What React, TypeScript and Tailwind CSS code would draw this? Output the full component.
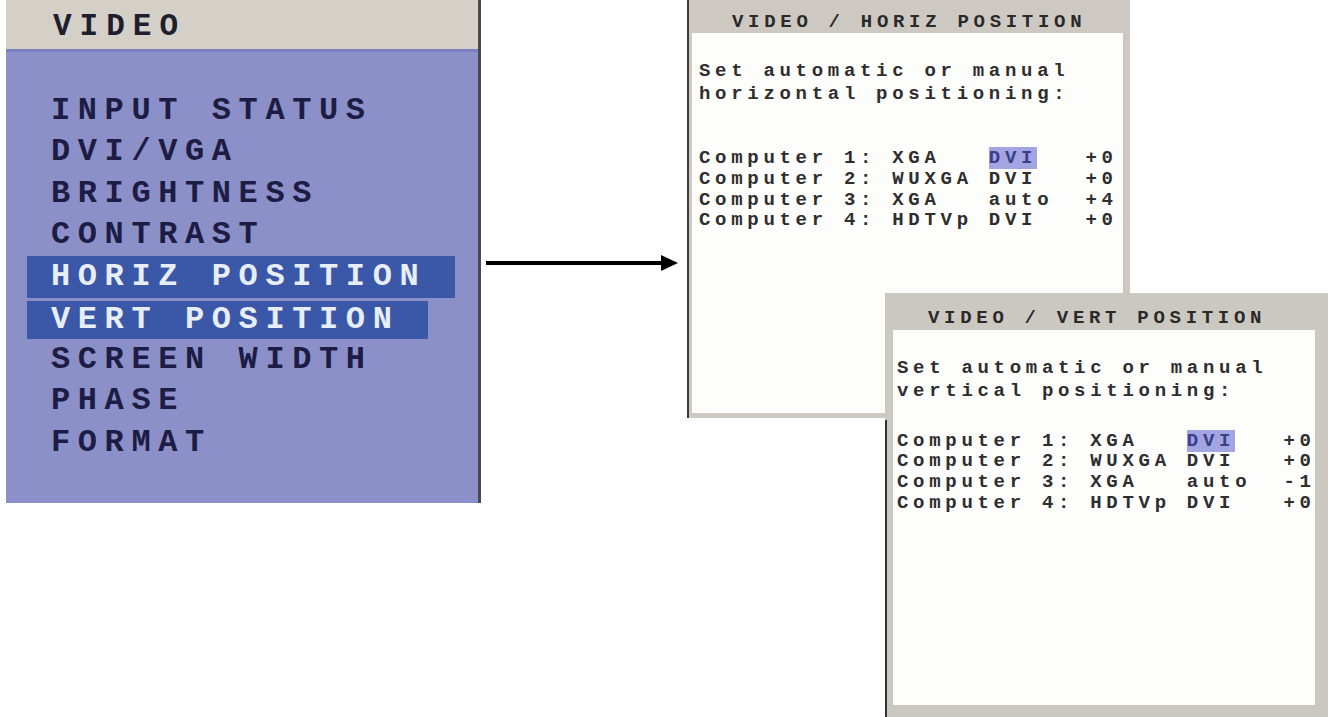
import React from "react";

const menu = [
  "INPUT STATUS",
  "DVI/VGA",
  "BRIGHTNESS",
  "CONTRAST",
  "HORIZ POSITION",
  "VERT POSITION",
  "SCREEN WIDTH",
  "PHASE",
  "FORMAT",
];

function Rows({ last }: { last: string }) {
  const rows: [string, string, string][] = [
    ["Computer 1: XGA   ", "DVI", "   +0"],
    ["Computer 2: WUXGA ", "DVI", "   +0"],
    ["Computer 3: XGA   ", "auto", `  ${last}`],
    ["Computer 4: HDTVp ", "DVI", "   +0"],
  ];
  return (
    <div className="flex flex-col">
      {rows.map((r, i) => (
        <div key={i} className="h-[20.8px] leading-[20.8px] whitespace-pre">
          {r[0]}
          {i === 0 ? (
            <span className="bg-[#a3a5e3] text-[#3a3f8a]">{r[1]}</span>
          ) : (
            r[1]
          )}
          {r[2]}
        </div>
      ))}
    </div>
  );
}

export default function App() {
  return (
    <div className="relative w-[1328px] h-[717px] overflow-hidden bg-white flex items-start font-['Liberation_Mono',monospace] font-bold">
      {/* Left OSD menu */}
      <div className="ml-[6px] w-[475px] h-[503px] flex flex-col border-r-[3px] border-[#4a4a4a]">
        <div className="h-[49px] bg-[#d4d0c8] pl-[47px] pt-[3px] flex items-center text-[31px] tracking-[8px] text-[#1e1e2e] leading-none">
          VIDEO
        </div>
        <div className="flex-1 bg-[#8c90c8] border-t-[3px] border-[#7b80c0] pt-[38px] flex flex-col">
          {menu.map((m, i) => {
            const hl = i === 4 || i === 5;
            return (
              <div key={m} className="h-[41.5px] flex items-stretch">
                <span
                  className={`ml-[21px] pl-[24px] pr-[29px] flex items-center text-[32px] tracking-[7.6px] leading-none ${
                    hl ? "bg-[#3b58a8] text-[#e8eef8]" : "text-[#1c1c44]"
                  } ${i === 5 ? "mt-[3px]" : ""}`}
                >
                  {m}
                </span>
              </div>
            );
          })}
        </div>
      </div>

      {/* Arrow */}
      <div className="w-[206px] pt-[255px] pl-[5px]">
        <svg width="192" height="16" viewBox="0 0 192 16">
          <rect x="0" y="6" width="180" height="4" fill="#000" />
          <polygon points="175,0 192,8 175,16" fill="#000" />
        </svg>
      </div>

      {/* Panel 1: HORIZ POSITION */}
      <div className="w-[443px] h-[418px] flex flex-col bg-[#cdc9c2] border-l-[2px] border-[#3c3c3c] text-[19px] tracking-[4.7px] text-[#2e2e2e]">
        <div className="h-[33px] pt-[11.5px] pl-[43px] leading-[21px] whitespace-pre text-[#2a2a2a]">
          VIDEO / HORIZ POSITION
        </div>
        <div className="flex-1 ml-[3px] mr-[7px] mb-[5px] bg-[#fdfdfb] pl-[7px] pt-[27px]">
          <div className="leading-[23px]">
            <div>Set automatic or manual</div>
            <div>horizontal positioning:</div>
          </div>
          <div className="mt-[42px]">
            <Rows last="+4" />
          </div>
        </div>
      </div>

      {/* Panel 2: VERT POSITION */}
      <div className="absolute left-[885px] top-[293px] w-[443px] h-[424px] flex flex-col bg-[#cbc8c1] text-[19px] tracking-[4.7px] text-[#2e2e2e]">
        <div className="absolute left-0 top-[127px] bottom-0 w-[2px] bg-[#333]" />
        <div className="h-[37px] pt-[14.5px] pl-[43px] leading-[21px] whitespace-pre text-[#2a2a2a]">
          VIDEO / VERT POSITION
        </div>
        <div className="flex-1 ml-[8px] mr-[13px] mb-[12px] bg-[#fdfdfb] pl-[4px] pt-[26.5px]">
          <div className="leading-[23px]">
            <div>Set automatic or manual</div>
            <div>vertical positioning:</div>
          </div>
          <div className="mt-[28px]">
            <Rows last="-1" />
          </div>
        </div>
      </div>
    </div>
  );
}
